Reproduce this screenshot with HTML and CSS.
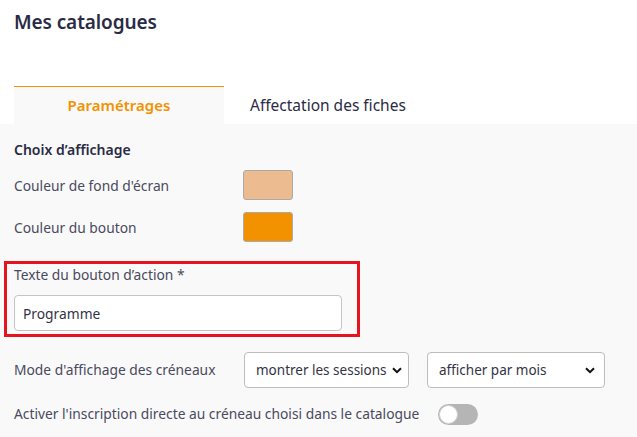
FILE: index.html
```html
<!DOCTYPE html>
<html lang="fr">
<head>
<meta charset="utf-8">
<link rel="stylesheet" href="styles.css">
</head>
<body>
<header class="page-header">
  <h1 class="page-title">Mes catalogues</h1>
</header>
<nav class="tabs">
  <div class="tab tab-active">Paramétrages</div>
  <div class="tab">Affectation des fiches</div>
</nav>
<main class="panel">
  <h2 class="section-title">Choix d’affichage</h2>
  <div class="row">
    <span class="label label-fixed">Couleur de fond d'écran</span>
    <span class="swatch swatch-light"></span>
  </div>
  <div class="row">
    <span class="label label-fixed">Couleur du bouton</span>
    <span class="swatch swatch-orange"></span>
  </div>
  <div class="highlight">
    <label class="label field-label">Texte du bouton d’action *</label>
    <input class="text-input" type="text" value="Programme">
  </div>
  <div class="row select-row">
    <span class="label label-fixed">Mode d'affichage des créneaux</span>
    <div class="select select-a"><span>montrer les sessions</span><svg class="chev" viewBox="0 0 10 7" width="10" height="7"><path d="M1 1.2 L5 5.2 L9 1.2" fill="none" stroke="#111" stroke-width="2"/></svg></div>
    <div class="select select-b"><span>afficher par mois</span><svg class="chev" viewBox="0 0 10 7" width="10" height="7"><path d="M1 1.2 L5 5.2 L9 1.2" fill="none" stroke="#111" stroke-width="2"/></svg></div>
  </div>
  <div class="row toggle-row">
    <span class="label">Activer l'inscription directe au créneau choisi dans le catalogue</span>
    <span class="toggle"><span class="knob"></span></span>
  </div>
</main>
</body>
</html>
```
FILE: styles.css
```css
* { box-sizing: border-box; }
html, body { margin: 0; padding: 0; }
body {
  width: 637px;
  height: 437px;
  overflow: hidden;
  background: #ffffff;
  font-family: "Noto Sans", "Open Sans", sans-serif;
  color: #45455a;
}
.page-header { padding: 8px 14px 0; height: 86px; }
.page-title {
  margin: 0;
  font-size: 19px;
  font-weight: 600;
  color: #2a2b45;
  line-height: 28px;
  letter-spacing: -0.1px;
}
.tabs {
  display: flex;
  padding-left: 14px;
  height: 38px;
}
.tab {
  font-size: 15.5px;
  line-height: 38px;
  color: #2a2b45;
  padding-left: 26px;
}
.tab-active {
  width: 210px;
  padding-left: 0;
  text-align: center;
  background: #f9f9f9;
  border-top: 1px solid #f39200;
  line-height: 37px;
  color: #f39200;
  font-size: 15px;
  font-weight: 600;
}
.panel {
  background: #f9f9f9;
  padding: 16px 0 20px 14px;
  height: 313px;
}
.section-title {
  margin: 0 0 10px;
  font-size: 14px;
  font-weight: 600;
  color: #2a2b45;
  line-height: 20px;
}
.row {
  display: flex;
  align-items: center;
  height: 30px;
  margin-bottom: 12px;
}
.row .label { padding-top: 2px; }
.label {
  font-size: 13.8px;
  color: #4a4a5e;
  line-height: 20px;
}
.label-fixed { width: 229px; flex: none; }
.swatch {
  width: 50px;
  height: 30px;
  border: 1px solid #aaaaaa;
  border-radius: 3px;
}
.swatch-light { background: #ecbb90; }
.swatch-orange { background: #f39200; }
.highlight {
  margin: 19px 0 0 -10px;
  width: 356px;
  border: 3px solid #e5141e;
  padding: 1px 15px 3px 7px;
}
.field-label { display: block; margin-bottom: 10px; }
.text-input {
  display: block;
  width: 328px;
  height: 36px;
  border: 1px solid #c4c4c4;
  border-radius: 4px;
  background: #fff;
  font-family: inherit;
  font-size: 13.8px;
  color: #333345;
  padding: 0 8px;
  margin: 0;
}
.select-row { height: 36px; margin-top: 15px; margin-bottom: 15px; }
.select-row .label { padding-top: 0; }
.select {
  display: flex;
  align-items: center;
  justify-content: space-between;
  height: 36px;
  border: 1px solid #bdbdbd;
  border-radius: 4px;
  background: #fff;
  font-size: 13.5px;
  color: #333345;
  padding: 0 6px 0 11px;
}
.select-a { width: 165px; margin-left: 1px; }
.select-b { width: 178px; margin-left: 18px; padding-right: 9px; }
.chev { flex: none; }
.toggle-row { height: 22px; }
.toggle-row .label { padding-top: 0; }
.toggle {
  margin-left: 19px;
  width: 40px;
  height: 21px;
  border-radius: 11px;
  background: #b5b5b5;
  position: relative;
  flex: none;
}
.knob {
  position: absolute;
  left: 1px;
  top: 1px;
  width: 19px;
  height: 19px;
  border-radius: 50%;
  background: #fff;
  border: 1px solid #d0d0d0;
}
```
